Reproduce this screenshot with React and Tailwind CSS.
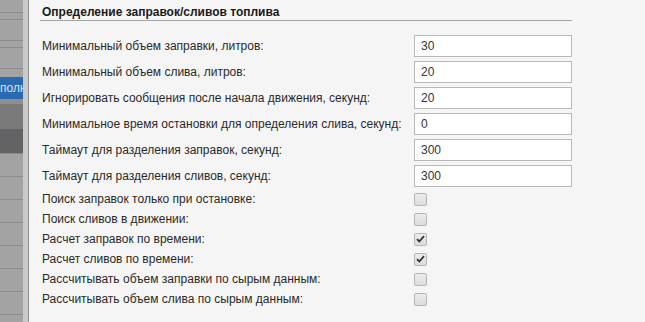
const inputs = [
  { label: 'Минимальный объем заправки, литров:', value: '30' },
  { label: 'Минимальный объем слива, литров:', value: '20' },
  { label: 'Игнорировать сообщения после начала движения, секунд:', value: '20' },
  { label: 'Минимальное время остановки для определения слива, секунд:', value: '0' },
  { label: 'Таймаут для разделения заправок, секунд:', value: '300' },
  { label: 'Таймаут для разделения сливов, секунд:', value: '300' },
];

const checks = [
  { label: 'Поиск заправок только при остановке:', checked: false },
  { label: 'Поиск сливов в движении:', checked: false },
  { label: 'Расчет заправок по времени:', checked: true },
  { label: 'Расчет сливов по времени:', checked: true },
  { label: 'Рассчитывать объем заправки по сырым данным:', checked: false },
  { label: 'Рассчитывать объем слива по сырым данным:', checked: false },
];

const sideRows = [
  { h: 'h-[13px]', bg: 'bg-[#a3a3a3]' },
  { h: 'h-[7px]', bg: 'bg-[#a3a3a3]' },
  { h: 'h-[21px]', bg: 'bg-[#a3a3a3]' },
  { h: 'h-[7px]', bg: 'bg-[#a3a3a3]' },
  { h: 'h-[21px]', bg: 'bg-[#a3a3a3]' },
];

function Checkbox({ checked }) {
  return (
    <div className="w-[13px] h-[13px] rounded-[2px] border border-[#b5b5b5] bg-gradient-to-b from-[#ececec] to-[#dcdcdc] flex items-center justify-center">
      {checked && (
        <svg width="9" height="8" viewBox="0 0 9 8">
          <path d="M1 4.2 L3.3 6.5 L8 1.2" fill="none" stroke="#333" strokeWidth="1.8" />
        </svg>
      )}
    </div>
  );
}

export default function App() {
  return (
    <div className="w-[645px] h-[322px] flex bg-[#f5f5f5] overflow-hidden font-['Liberation_Sans',Arial,sans-serif] text-[12px] text-[#2a2a2a]">
      {/* sidebar */}
      <div className="flex h-full shrink-0">
        <div className="w-[23px] h-full flex flex-col bg-[#a3a3a3]">
          {sideRows.map((r, i) => (
            <div key={i} className={`${r.h} ${r.bg} border-b border-[#8c8c8c] shrink-0`} />
          ))}
          <div className="h-[8px] shrink-0" />
          <div className="h-[22px] shrink-0 bg-[#2c69b3] text-[#d6e2f0] text-[12px] leading-[22px] whitespace-nowrap overflow-hidden">полн</div>
          <div className="h-[5px] shrink-0 bg-[#8f8f8f]" />
          <div className="h-[25px] shrink-0 bg-[#7a7a7a]" />
          <div className="h-[25px] shrink-0 bg-[#636366] border-b border-[#8c8c8c]" />
          {[0, 1, 2, 3, 4, 5, 6].map((i) => (
            <div key={i} className="h-[23px] shrink-0 border-b border-[#8c8c8c]" />
          ))}
        </div>
        <div className="w-[5px] h-full bg-[#c9c9c9]" />
        <div className="w-px h-full bg-[#8e8e8e]" />
      </div>

      {/* content */}
      <div className="pl-[11px] pt-[5px]">
        <div className="w-[532px] border-b border-[#a3a3a3] pl-[2px] pb-[1px]">
          <div className="font-bold text-[12px] leading-[14px] text-[#1a1a1a]">Определение заправок/сливов топлива</div>
        </div>

        <div className="pl-[2px] pt-[14px] flex flex-col gap-[4px]">
          {inputs.map((r) => (
            <div key={r.label} className="flex items-center h-[22px]">
              <div className="w-[372px] whitespace-nowrap">{r.label}</div>
              <div className="w-[158px] h-[22px] bg-white border border-[#b8b8b8] px-[6px] leading-[20px] text-[#333]">{r.value}</div>
            </div>
          ))}
        </div>

        <div className="pl-[2px] pt-[2px] flex flex-col">
          {checks.map((r) => (
            <div key={r.label} className="flex items-center h-[20px]">
              <div className="w-[372px] whitespace-nowrap">{r.label}</div>
              <Checkbox checked={r.checked} />
            </div>
          ))}
        </div>
      </div>
    </div>
  );
}
